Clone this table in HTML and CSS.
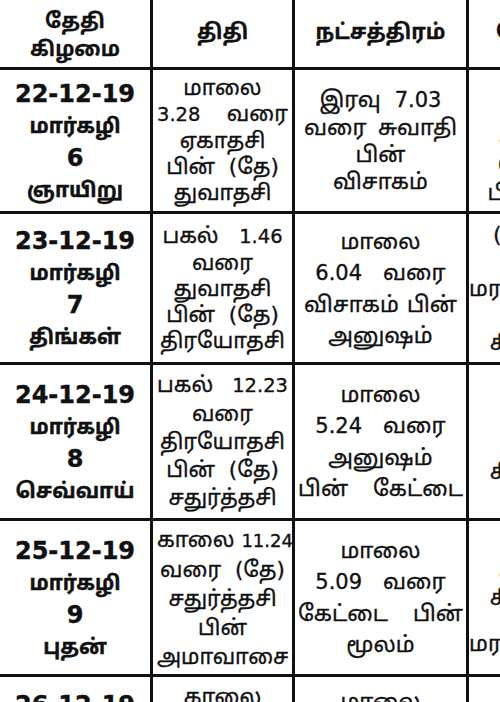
FILE: index.html
```html
<!DOCTYPE html>
<html lang="ta">
<head>
<meta charset="utf-8">
<title>நாள்காட்டி</title>
<link rel="stylesheet" href="styles.css">
</head>
<body>
<table class="cal">
  <colgroup>
    <col class="c-date"><col class="c-tithi"><col class="c-star"><col class="c-yoga">
  </colgroup>
  <tr class="head">
    <th class="h-date"><span class="ln">தேதி</span><span class="ln">கிழமை</span></th>
    <th>திதி</th>
    <th>நட்சத்திரம்</th>
    <th class="h-yoga">யோகம்</th>
  </tr>
  <tr class="r1">
    <td class="date"><span class="d">22-12-19</span><span class="m">மார்கழி</span><span class="n">6</span><span class="w">ஞாயிறு</span></td>
    <td class="tithi"><span class="ln">மாலை</span><span class="ln sp"><span class="num">3.28</span> வரை</span><span class="ln">ஏகாதசி</span><span class="ln">பின்&nbsp; (தே)</span><span class="ln">துவாதசி</span></td>
    <td class="star"><span class="ln">இரவு&nbsp; <span class="num">7.03</span></span><span class="ln sp">வரை சுவாதி</span><span class="ln">பின்</span><span class="ln">விசாகம்</span></td>
    <td class="yoga y1"><span class="ln">6.40</span><span class="ln">வரை</span><span class="ln">·அமிர்த</span><span class="ln">யோகம்</span><span class="ln">பின் (தே)</span></td>
  </tr>
  <tr class="r2">
    <td class="date"><span class="d">23-12-19</span><span class="m">மார்கழி</span><span class="n">7</span><span class="w">திங்கள்</span></td>
    <td class="tithi"><span class="ln">பகல்&nbsp;&nbsp; <span class="num">1.46</span></span><span class="ln">வரை</span><span class="ln">துவாதசி</span><span class="ln">பின்&nbsp; (தே)</span><span class="ln">திரயோதசி</span></td>
    <td class="star"><span class="ln">மாலை</span><span class="ln"><span class="num">6.04</span>&nbsp;&nbsp; வரை</span><span class="ln sp">விசாகம் பின்</span><span class="ln">அனுஷம்</span></td>
    <td class="yoga y2"><span class="ln">(மாலை)</span><span class="ln">வரை</span><span class="ln">மரணயோகம்</span><span class="ln">பின்</span><span class="ln">சித்திரை</span></td>
  </tr>
  <tr class="r3">
    <td class="date"><span class="d">24-12-19</span><span class="m">மார்கழி</span><span class="n">8</span><span class="w">செவ்வாய்</span></td>
    <td class="tithi"><span class="ln sp">பகல் <span class="num">12.23</span></span><span class="ln">வரை</span><span class="ln">திரயோதசி</span><span class="ln">பின்&nbsp; (தே)</span><span class="ln">சதுர்த்தசி</span></td>
    <td class="star"><span class="ln">மாலை</span><span class="ln"><span class="num">5.24</span>&nbsp;&nbsp; வரை</span><span class="ln">அனுஷம்</span><span class="ln sp">பின் கேட்டை</span></td>
    <td class="yoga y3"><span class="ln">இரவு</span><span class="ln">வரை</span><span class="ln">சித்திரை</span></td>
  </tr>
  <tr class="r4">
    <td class="date"><span class="d">25-12-19</span><span class="m">மார்கழி</span><span class="n">9</span><span class="w">புதன்</span></td>
    <td class="tithi"><span class="ln sp">காலை <span class="num narrow">11.24</span></span><span class="ln">வரை&nbsp; (தே)</span><span class="ln">சதுர்த்தசி</span><span class="ln">பின்</span><span class="ln">அமாவாசை</span></td>
    <td class="star"><span class="ln">மாலை</span><span class="ln"><span class="num">5.09</span>&nbsp;&nbsp; வரை</span><span class="ln sp">கேட்டை பின்</span><span class="ln">மூலம்</span></td>
    <td class="yoga y4"><span class="ln">காலை</span><span class="ln">·அமிர்த</span><span class="ln">சித்திரை</span><span class="ln">பின்</span><span class="ln">மரணயோகம்</span></td>
  </tr>
  <tr class="r5">
    <td class="date"><span class="d">26-12-19</span><span class="m">மார்கழி</span><span class="n">10</span><span class="w">வியாழன்</span></td>
    <td class="tithi"><span class="ln">காலை</span><span class="ln sp"><span class="num">10.42</span> வரை</span><span class="ln">அமாவாசை</span></td>
    <td class="star"><span class="ln">மாலை</span><span class="ln"><span class="num">5.20</span>&nbsp;&nbsp; வரை</span><span class="ln">மூலம்</span></td>
    <td class="yoga"><span class="ln">நாள்</span><span class="ln">வரை</span></td>
  </tr>
</table>
</body>
</html>
```

FILE: styles.css
```css
html, body {
  margin: 0;
  padding: 0;
  background: #ffffff;
  overflow: hidden;
}

.cal {
  border-collapse: separate;
  border-spacing: 0;
  table-layout: fixed;
  width: 617px;
  color: #111111;
  font-family: "DejaVu Sans", "Noto Sans Tamil", "Lohit Tamil", "Noto Sans", sans-serif;
}

.c-date { width: 153px; }
.c-tithi { width: 142px; }
.c-star { width: 174px; }
.c-yoga { width: 148px; }

.cal th,
.cal td {
  box-sizing: border-box;
  border-right: 3px solid #111111;
  border-bottom: 3px solid #111111;
  text-align: center;
  vertical-align: middle;
  padding: 0;
}

.ln { display: block; white-space: nowrap; }
.sp { text-align: justify; text-align-last: justify; }

/* header */
.head th {
  height: 70px;
  font-size: 21px;
  font-weight: bold;
  -webkit-text-stroke: 0.3px #111111;
}
.cal .h-date { font-size: 20.5px; padding-top: 3px; }
.h-date .ln { line-height: 28px; }

/* row heights */
.r1 td { height: 144px; }
.r2 td { height: 151px; }
.r3 td { height: 156px; }
.r4 td { height: 156px; }
.r5 td { height: 160px; vertical-align: top; }

/* date column */
.date {
  font-weight: bold;
  -webkit-text-stroke: 0.4px #111111;
}
.date .d, .date .n {
  display: block;
  font-size: 24px;
  line-height: 34px;
}
.date .m, .date .w {
  display: block;
  font-size: 20.5px;
  line-height: 30px;
}
.cal .r5 .date { padding-top: 11px; }

/* tithi column */
.cal .tithi {
  font-size: 21.5px;
  line-height: 26px;
  padding: 0 4px;
  -webkit-text-stroke: 0.35px #111111;
}
.tithi .num { font-size: 19.5px; }
.tithi .num.narrow { font-size: 18px; }
.r3 .tithi { line-height: 28px; }
.r4 .tithi { line-height: 29px; }
.cal .r5 .tithi { padding-top: 7px; }

/* star column */
.cal .star {
  font-size: 22px;
  line-height: 31px;
  padding: 0 9px;
  -webkit-text-stroke: 0.35px #111111;
}
.star .num { font-size: 21px; }
.r1 .star { line-height: 27px; }
.r3 .star .sp, .r4 .star .sp { margin: 0 -6px; }
.cal .r5 .star { padding-top: 9px; }

/* yoga column (cut off at right edge) */
.yoga {
  font-size: 22px;
  line-height: 26px;
  -webkit-text-stroke: 0.35px #111111;
}
.y2 { line-height: 27px; }
.y3 { line-height: 30px; padding-top: 30px; }
.y4 { line-height: 23px; }
```
